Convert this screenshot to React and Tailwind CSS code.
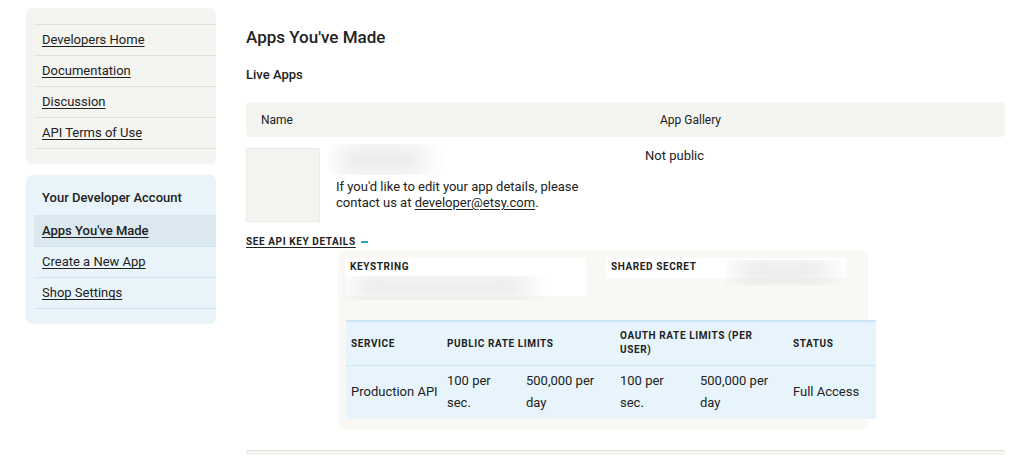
import React from "react";

const font = { fontFamily: "Roboto, 'Liberation Sans', sans-serif" };

const topLinks = ["Developers Home", "Documentation", "Discussion", "API Terms of Use"];
const accountLinks = [
  { label: "Apps You've Made", active: true },
  { label: "Create a New App" },
  { label: "Shop Settings" },
];

// blurred placeholder (redacted values)
function Blur({ className, inner }) {
  return (
    <div className={"overflow-hidden " + className}>
      <div className={"absolute rounded-full bg-[#d9d9d9] blur-md " + inner}></div>
    </div>
  );
}

export default function App() {
  return (
    <div className="min-h-[472px] bg-white text-[#222] pl-[26px] pt-2 flex" style={font}>
      {/* sidebar */}
      <div className="w-[190px] shrink-0 flex flex-col gap-[11px]">
        <div className="bg-[#f4f4f1] rounded-md pl-2 pt-4 pb-[15px]">
          <ul className="border-t border-[#e1e1dc]">
            {topLinks.map((l) => (
              <li key={l} className="h-[31px] border-b border-[#e1e1dc] flex items-center pl-2">
                <a href="#" className="text-[13px] underline underline-offset-2">
                  {l}
                </a>
              </li>
            ))}
          </ul>
        </div>
        <div className="bg-[#e8f4fa] rounded-md pl-2 pb-[15px]">
          <div className="h-[40px] pt-[6px] flex items-center pl-2 text-[13px] font-medium">
            Your Developer Account
          </div>
          <ul className="border-t border-[#d3e6f1]">
            {accountLinks.map((l) => (
              <li
                key={l.label}
                className={
                  "h-[31px] border-b border-[#cfe5f2] flex items-center pl-2 " +
                  (l.active ? "bg-[#dbe8ef] font-medium" : "")
                }
              >
                <a href="#" className="text-[13px] underline underline-offset-2">
                  {l.label}
                </a>
              </li>
            ))}
          </ul>
        </div>
      </div>

      {/* main */}
      <div className="ml-[30px] w-[759px] pt-[17px]">
        <h1 className="text-[17px] leading-6 font-medium">Apps You've Made</h1>
        <h2 className="mt-4 text-[13px] leading-5 font-medium">Live Apps</h2>

        <div className="mt-[17px] h-[35px] bg-[#f4f4f1] rounded flex items-center text-[12px]">
          <div className="w-[399px] pl-[15px]">Name</div>
          <div className="pl-[15px]">App Gallery</div>
        </div>

        <div className="flex pt-[7px]">
          <div className="w-[399px] flex">
            <div className="mt-1 w-[74px] h-[74px] bg-[#f4f4f1] border border-[#ebebe7]"></div>
            <div className="ml-[9px]">
              <Blur className="relative w-[116px] h-[31px]" inner="left-2 top-2 w-[90px] h-[16px]" />
              <p className="ml-[7px] mt-[4px] text-[13px] leading-4 w-[260px]">
                If you'd like to edit your app details, please contact us at{" "}
                <a href="#" className="underline underline-offset-2">
                  developer@etsy.com
                </a>
                .
              </p>
            </div>
          </div>
          <div className="pt-[2px] text-[13px]">Not public</div>
        </div>

        <div className="mt-[12px] flex items-center gap-[5px]">
          <a href="#" className="text-[10px] font-bold tracking-[0.06em] underline underline-offset-2">
            SEE API KEY DETAILS
          </a>
          <span className="w-[7px] h-[2px] bg-[#2a9fc0] mt-[1px]"></span>
        </div>

        {/* api key panel */}
        <div className="ml-[92px] mt-px w-[530px] h-[180px] bg-[#f9f8f5] rounded-md pt-2 pl-[7px]">
          <div className="flex gap-5">
            <div className="relative w-[241px] h-[38px] bg-white">
              <div className="pl-[5px] pt-px text-[10px] font-bold tracking-[0.06em]">KEYSTRING</div>
              <Blur className="absolute left-[-2px] top-[18px] w-[205px] h-[24px]" inner="left-2 top-1 w-[180px] h-[14px]" />
            </div>
            <div className="relative w-[240px] h-[20px] bg-white">
              <div className="pl-[5px] pt-px text-[10px] font-bold tracking-[0.06em]">SHARED SECRET</div>
              <Blur className="absolute left-[119px] top-[2px] w-[120px] h-[25px]" inner="left-2 top-1 w-[100px] h-[14px]" />
            </div>
          </div>

          <table className="mt-[24px] ml-px w-[530px] table-fixed bg-[#e7f4fb] border-t-2 border-[#cde6f5] border-collapse">
            <colgroup>
              <col className="w-[96px]" />
              <col className="w-[79px]" />
              <col className="w-[94px]" />
              <col className="w-[80px]" />
              <col className="w-[93px]" />
              <col className="w-[88px]" />
            </colgroup>
            <thead>
              <tr className="h-[44px] border-b border-[#cde6f5] text-[10px] tracking-[0.06em] text-left">
                <th className="pl-[5px] font-bold">SERVICE</th>
                <th colSpan={2} className="pl-[5px] font-bold">PUBLIC RATE LIMITS</th>
                <th colSpan={2} className="pl-[5px] font-bold leading-[14px]">
                  <span className="block w-[140px]">OAUTH RATE LIMITS (PER USER)</span>
                </th>
                <th className="pl-[5px] font-bold">STATUS</th>
              </tr>
            </thead>
            <tbody>
              <tr className="h-[54px] text-[13px] leading-[22px]">
                <td className="pl-[5px] whitespace-nowrap">Production API</td>
                <td className="pl-[5px] pr-3">100 per sec.</td>
                <td className="pl-[5px] pr-2">500,000 per day</td>
                <td className="pl-[5px] pr-3">100 per sec.</td>
                <td className="pl-[5px] pr-2">500,000 per day</td>
                <td className="pl-[5px]">Full Access</td>
              </tr>
            </tbody>
          </table>
        </div>

        <div className="mt-5 h-[5px] border-t border-[#e3e3de] bg-[#f4f4f1]"></div>
      </div>
    </div>
  );
}
